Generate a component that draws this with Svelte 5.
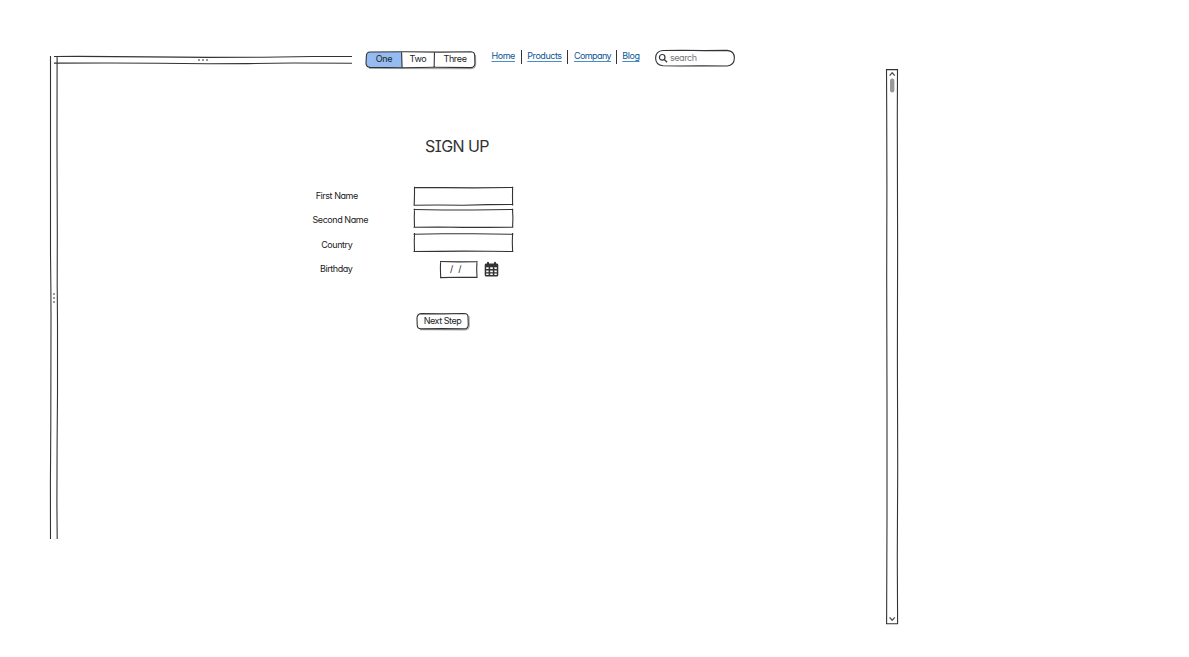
<script>
  const tabs = [
    { name: 'One', width: 36 },
    { name: 'Two', width: 32 },
    { name: 'Three', width: 42 }
  ];
  const links = ['Home', 'Products', 'Company', 'Blog'];
  const labels = ['First Name', 'Second Name', 'Country', 'Birthday'];
  const fields = [
    'M1 1.5L30 1.6L60 1.9L100.3 1.5M99.6 .8L99.5 10L99.6 19.4M100.3 18.5L75 18.6L50 19.2L25 19L.5 19.2M1.5 .8L1.5 8L1.2 19.6',
    'M.6 1.5L30 2L60 2L100.3 1.5M99.5 .8L99.9 10L99.6 19.4M100.3 19.2L75 19.4L50 19.4L25 19L.5 19.2M1.5 .8L1.3 10L1.5 19.6',
    'M.6 2.2L30 1.7L60 1.7L100.3 2.3M99.6 1L99.3 10L99.6 19.8M100.3 19.5L75 19.3L50 19.1L25 19.4L.5 19.5M1.5 1L1.3 10L1.5 19.8'
  ];
</script>

<div class="page">
  <svg class="ink vsplit" width="10" height="486" viewBox="0 0 10 486">
    <path d="M2.5 2V200L2.9 236L3 262L2.8 370L2.4 430L2.5 485" />
    <path d="M9.1 2L9 90L9.3 180L9.2 230L9.5 270L9.5 340L9.1 390L8.9 450L9.2 485" />
    <path class="dots" d="M5 240h2M5 244h2M5 248h2" />
  </svg>

  <main>
    <header>
      <svg class="ink hsplit" width="296" height="14" viewBox="0 0 296 14">
        <path d="M-4 4.5L20 4.4L90 4.9L150 5.4L205 5.3L255 4.5L294 4.5" />
        <path d="M-4 11.1L50 11L100 11.3L150 11.7L190 11.6L235 11L294 11.3" />
        <path class="dots" d="M140 8h2M144 8h2M148 8h2" />
      </svg>

      <div class="tabs">
        <svg class="ink back" width="112" height="20" viewBox="0 0 112 20">
          <path class="shade" d="M4 18.4L106 18.6Q110.8 18.4 110.7 14L110.5 5" />
          <path class="blue" d="M37 2L5 2Q1.4 2 1.4 6L1 13Q1 17.4 5 17.4L37 17.6Z" />
          <path d="M5 2L40 1.7L75 2.1L106 1.8Q109.9 2 109.7 6L109.9 13Q109.9 17.6 106 17.6L70 17.3L38 17.7L5 17.4Q1 17 1 13L1.4 6Q1.4 2 5 2ZM36.6 2L37.1 17.5M69.5 2L69.1 17.5" />
        </svg>
        {#each tabs as tab}
          <span style:width="{tab.width}px">{tab.name}</span>
        {/each}
      </div>

      <nav>
        {#each links as link}
          <a href="#top">{link}</a>
        {/each}
      </nav>

      <div class="search">
        <svg class="ink back" width="82" height="18" viewBox="0 0 82 18">
          <path d="M9 1.5L28 1.2L50 1.6L73 1.4Q80.4 2 80.4 9Q80.2 16.6 73 17L48 16.7L25 17L9 16.8Q1.6 16 1.6 9Q1.8 2 9 1.5Z" />
          <circle class="lens" cx="8.2" cy="8.3" r="2.8" />
          <path class="lens" d="M10.3 10.5L13.1 13.2" />
        </svg>
        <span>search</span>
      </div>
    </header>

    <h1>SIGN UP</h1>

    <form>
      <div class="labels">
        {#each labels as label}
          <span>{label}</span>
        {/each}
      </div>
      <div class="fields">
        {#each fields as d}
          <svg class="ink" width="101" height="21" viewBox="0 0 101 21"><path {d} /></svg>
        {/each}
        <div class="date">
          <div class="slashes">
            <svg class="ink back" width="40" height="19" viewBox="0 0 40 19">
              <path d="M1 1.5L20 1.9L38.5 1.7M38 1L37.7 9L38 17.8M38.5 17.4L20 17.2L1 17.6M1.6 1L1.4 8L1.7 18.2" />
            </svg>
            <span>/&nbsp; /</span>
          </div>
          <svg class="calendar" width="15" height="17" viewBox="0 0 15 17">
            <path fill="#333" d="M2 2.5H3V1.4Q4 .3 5 1.4V2.5H10V1.4Q11 .3 12 1.4V2.5H13Q14.3 2.7 14.3 4V14Q14.3 15.5 12.8 15.5H2.2Q.7 15.5 .7 14V4Q.7 2.5 2 2.5Z" />
            <path fill="#fff" d="M2.2 6.3h2.4v1.8H2.2zM6.2 6.3h2.6v1.8H6.2zM10.4 6.3h2.4v1.8h-2.4zM2.2 9.4h2.4v1.8H2.2zM6.2 9.4h2.6v1.8H6.2zM10.4 9.4h2.4v1.8h-2.4zM2.2 12.5h2.4v1.6H2.2zM6.2 12.5h2.6v1.6H6.2zM10.4 12.5h2.4v1.6h-2.4z" />
          </svg>
        </div>
      </div>
    </form>

    <button type="button">
      <svg class="ink back" width="55" height="19" viewBox="0 0 55 19">
        <path class="shade" d="M4 17.8L48 18Q53.6 18 53.3 13L53.1 4" />
        <path fill="#fff" d="M5 1.6L26 1.9L48 1.5Q52.2 1.6 52 5L52.3 13Q52 17 48 16.9L26 16.6L5 16.9Q1.2 16.6 1.2 13L1 6Q1.2 2 5 1.6Z" />
      </svg>
      Next Step
    </button>
  </main>

  <svg class="ink scroll" width="16" height="559" viewBox="0 0 16 559">
    <path d="M2 2.6H14M13.5 2L13.3 50L13.6 180L13.4 290L13.7 400L13.3 490L13.6 557M14 556.6L2 556.7M2.5 2L2.7 40L2.9 120L2.7 210L3 340L3 450L2.6 557" />
    <path class="arrow" d="M5.6 8.6L8.2 5.8L10.8 8.6M5.6 550.4L8.2 553.2L10.8 550.4" />
    <rect x="6" y="11.5" width="4.4" height="14" rx="2.2" fill="#999" stroke="none" />
  </svg>
</div>

<style>
  :global(body) {
    background: #fff;
  }
  .page {
    display: flex;
    align-items: flex-start;
    box-sizing: border-box;
    width: 1189px;
    height: 657px;
    padding-left: 48px;
    overflow: hidden;
    font: 9px/12px Inter, sans-serif;
    font-feature-settings: 'cv11', 'cv08';
    letter-spacing: -0.45px;
    color: #222;
  }
  svg {
    display: block;
    flex: none;
    overflow: visible;
  }
  .ink {
    fill: none;
    stroke: #333;
    stroke-width: 1.1;
    stroke-linejoin: round;
  }
  .back {
    position: absolute;
    left: 0;
    top: 0;
    z-index: -1;
  }
  .ink .dots {
    stroke: #777;
    stroke-width: 1.6;
  }
  .ink .shade {
    stroke: #aaa;
  }
  .ink .blue {
    fill: #94bbf2;
    stroke: none;
  }
  .ink .lens {
    stroke-width: 1.2;
  }
  .ink .arrow {
    stroke: #555;
    stroke-width: 1.3;
  }
  .vsplit {
    margin-top: 54px;
  }
  main {
    width: 826px;
  }
  header {
    display: flex;
    height: 70px;
    padding-top: 49px;
    box-sizing: border-box;
    align-items: flex-start;
  }
  .hsplit {
    margin-top: 3px;
  }
  .tabs {
    position: relative;
    z-index: 0;
    display: flex;
    width: 112px;
    height: 20px;
    margin: 1px 0 0 11px;
    padding: 3px 0 0 1px;
    box-sizing: border-box;
    text-align: center;
    letter-spacing: -0.35px;
  }
  nav {
    display: flex;
    width: 149px;
    margin: 1px 0 0 14.5px;
  }
  nav a {
    height: 14px;
    color: #0d5596;
    text-decoration-color: #4a8cc4;
    text-decoration-thickness: 1px;
    text-decoration-skip-ink: none;
    text-underline-offset: 2px;
  }
  nav a + a {
    margin-left: 5.7px;
    padding-left: 5.7px;
    border-left: 1px solid #333;
  }
  nav a:nth-child(3) {
    letter-spacing: -0.6px;
  }
  nav a:nth-child(4) {
    margin-left: 5.2px;
    padding-left: 5.2px;
  }
  .search {
    position: relative;
    z-index: 0;
    width: 82px;
    height: 18px;
    margin-left: 13.5px;
    padding: 3px 0 0 16px;
    box-sizing: border-box;
    color: #777;
    letter-spacing: -0.45px;
  }
  h1 {
    width: 86px;
    margin: 65px 0 0 356px;
    font-size: 16px;
    font-weight: 400;
    line-height: 22px;
    letter-spacing: -0.55px;
    text-align: center;
    white-space: nowrap;
    color: #333;
  }
  form {
    display: flex;
    margin: 29px 0 0 238px;
  }
  .labels {
    display: grid;
    grid-auto-rows: 24.3px;
    width: 81.5px;
    padding-top: 4px;
    text-align: center;
  }
  .labels span:nth-child(2) {
    padding-left: 7px;
  }
  .labels span:nth-child(4) {
    padding-right: 1px;
  }
  .fields {
    display: flex;
    flex-direction: column;
    width: 101px;
    height: 96px;
    margin-left: 35.5px;
  }
  .fields > svg:nth-child(2) {
    margin-top: 1px;
  }
  .fields > svg:nth-child(3) {
    margin-top: 3px;
  }
  .date {
    display: flex;
    margin: 7px 0 0 26px;
  }
  .slashes {
    position: relative;
    z-index: 0;
    width: 40px;
    height: 19px;
    padding: 3px 0 0 11px;
    box-sizing: border-box;
    white-space: nowrap;
    letter-spacing: 0;
  }
  .calendar {
    margin: 1px 0 0 5px;
  }
  button {
    position: relative;
    z-index: 0;
    display: block;
    width: 55px;
    height: 19px;
    margin: 25px 0 0 358px;
    padding: 0 2px 2px 0;
    border: 0;
    background: none;
    color: #222;
    font: inherit;
    font-feature-settings: inherit;
    letter-spacing: inherit;
    white-space: nowrap;
  }
  .scroll {
    margin-top: 67px;
  }
</style>
